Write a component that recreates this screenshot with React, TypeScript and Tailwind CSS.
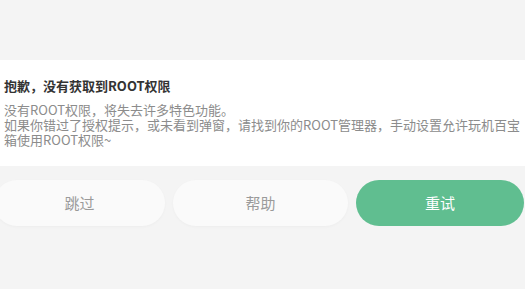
import React from "react";

const font = { fontFamily: '"Noto Sans CJK SC", "Noto Sans", sans-serif' };

export default function App() {
  return (
    <div className="w-[525px] h-[289px] bg-[#f4f4f4] overflow-hidden" style={font}>
      <div className="h-[60px]" />
      <div className="bg-white pt-[18px] pb-[19px] pl-[4px]">
        <div className="text-[13px] leading-[16px] font-bold text-[#333333] whitespace-nowrap">
          抱歉，没有获取到ROOT权限
        </div>
        <div className="mt-[8px] text-[13px] leading-[15px] text-[#8c8c8c] whitespace-nowrap">
          没有ROOT权限，将失去许多特色功能。
          <br />
          如果你错过了授权提示，或未看到弹窗，请找到你的ROOT管理器，手动设置允许玩机百宝
          <br />
          箱使用ROOT权限~
        </div>
      </div>
      <div className="mt-[14px] flex gap-2 ml-[-6px]">
        <button className="w-[171px] h-[46px] shrink-0 rounded-full bg-[#fafafa] shadow-[0_1px_3px_rgba(0,0,0,0.03)] text-[15px] text-[#9a9a9a]">
          跳过
        </button>
        <button className="w-[175px] h-[46px] shrink-0 rounded-full bg-[#fafafa] shadow-[0_1px_3px_rgba(0,0,0,0.03)] text-[15px] text-[#9a9a9a]">
          帮助
        </button>
        <button className="w-[168px] h-[46px] shrink-0 rounded-full bg-[#60be90] text-[15px] text-white">
          重试
        </button>
      </div>
    </div>
  );
}
